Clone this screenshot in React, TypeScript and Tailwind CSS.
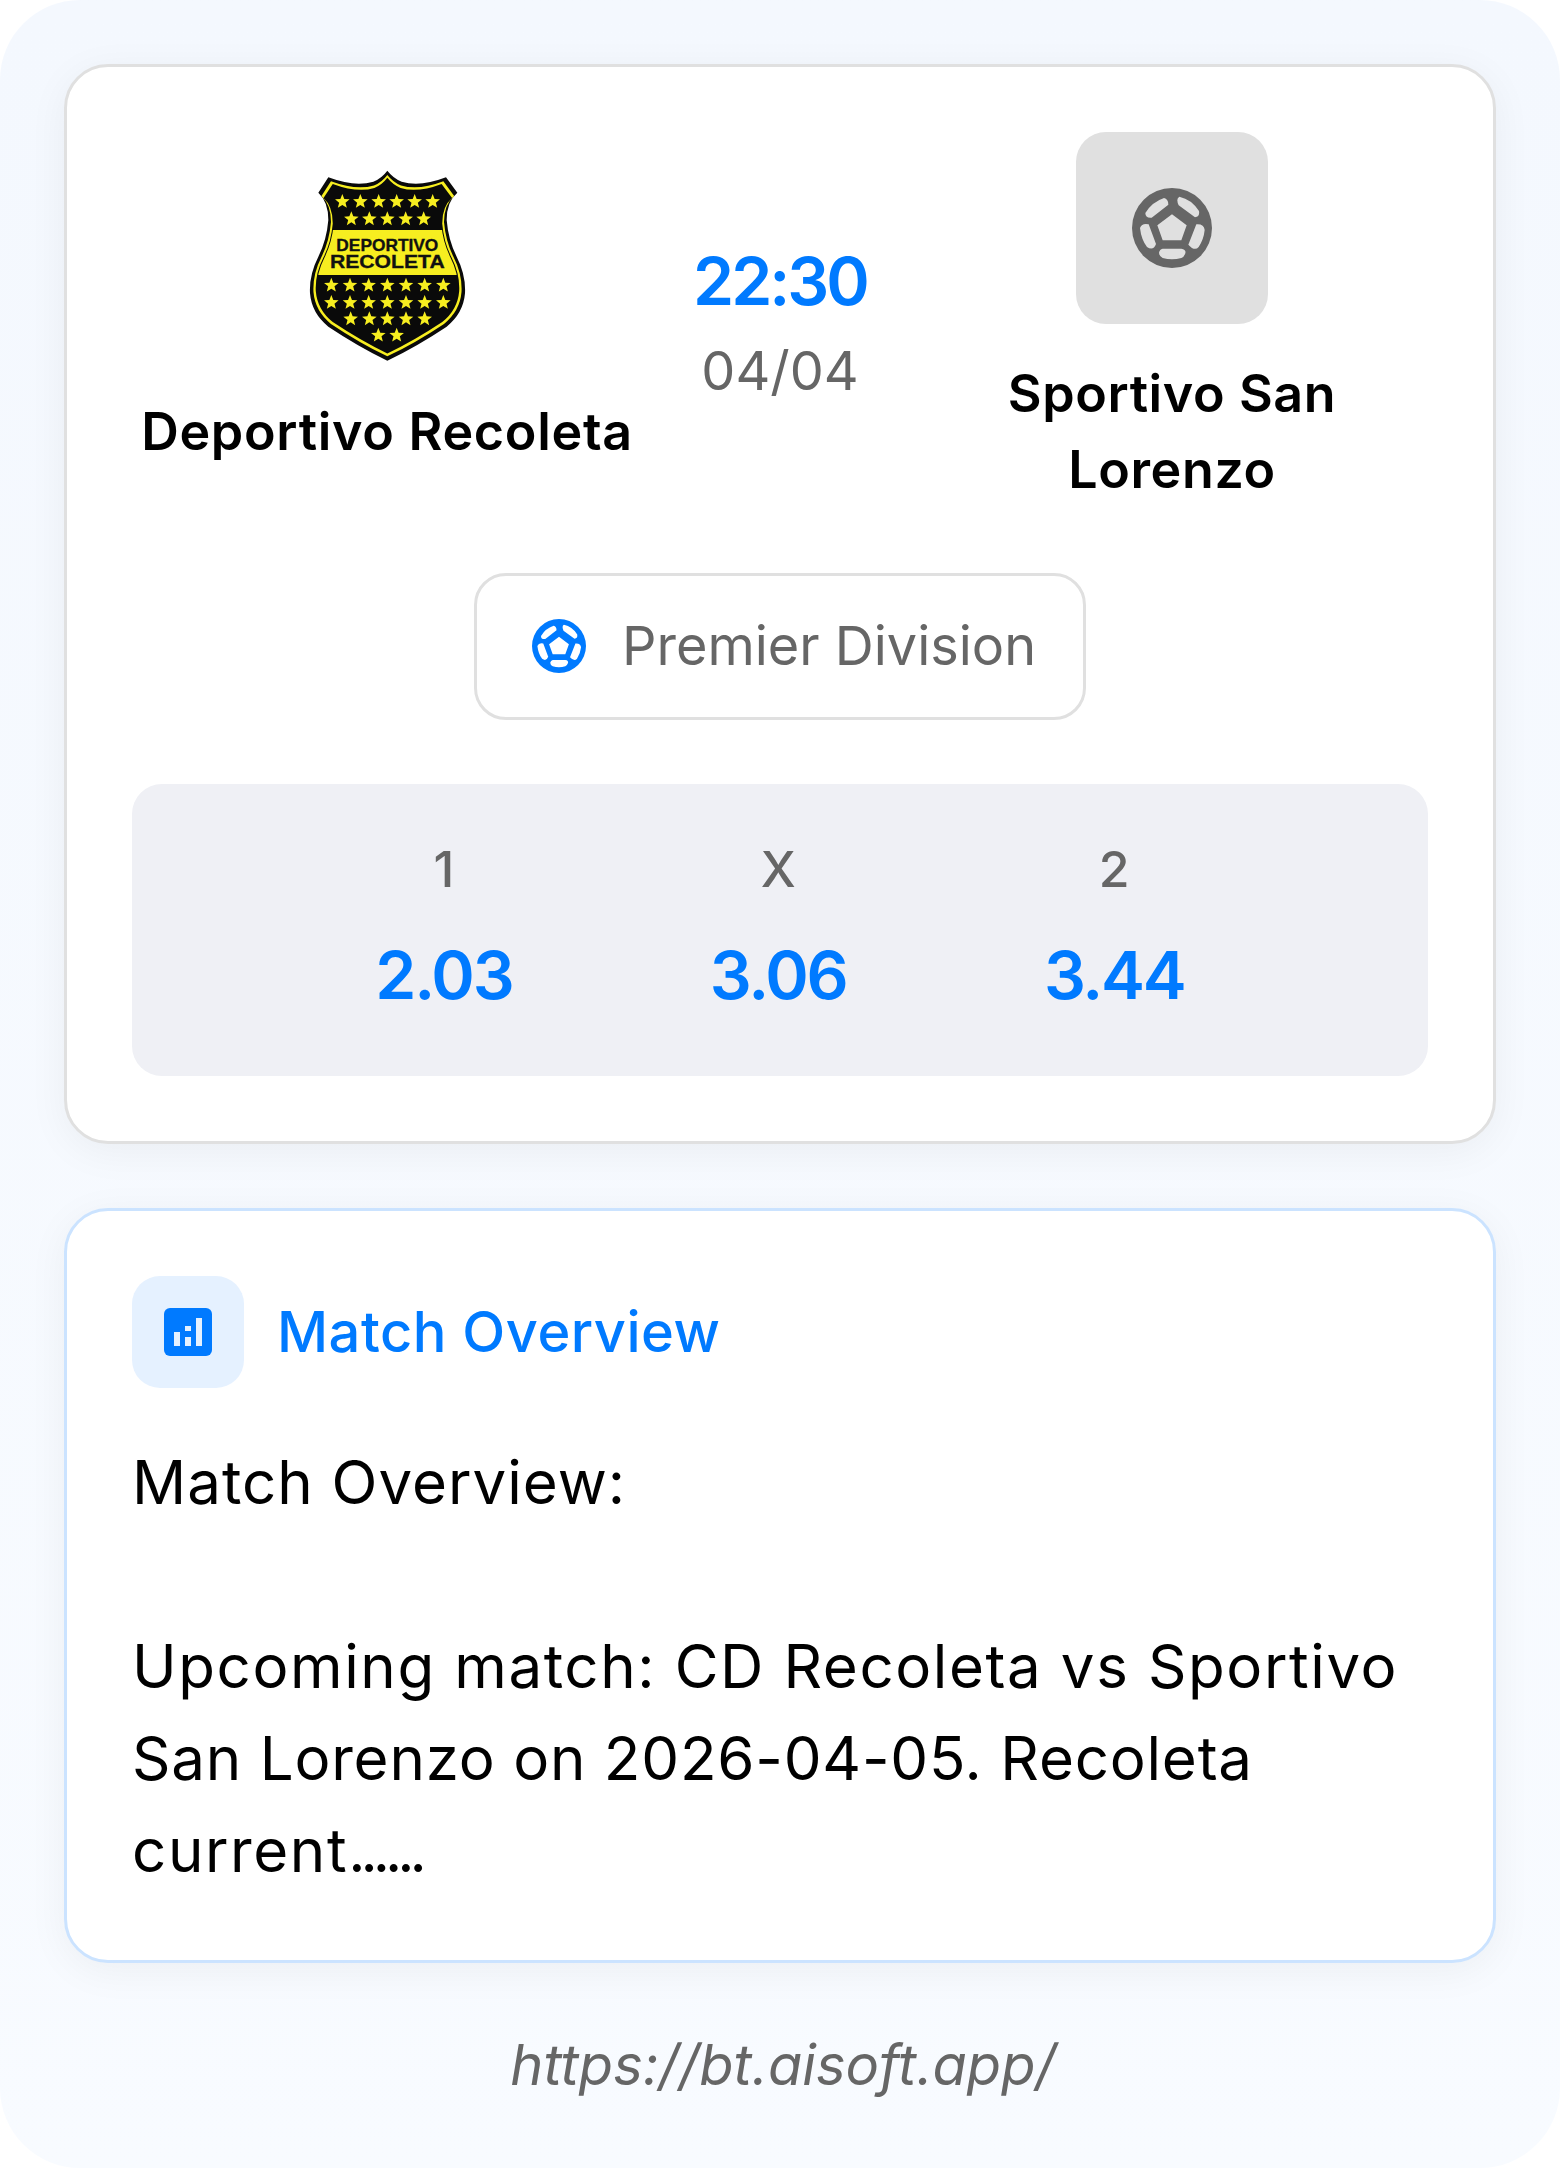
import React from 'react';

const BLUE = '#007aff';

const BALL_PATH =
  'M12 0a12 12 0 1 0 0 24a12 12 0 1 0 0-24z' +
  'M12 7.9L16.4 11.2L14.8 15.7H9.2L7.6 11.2z' +
  'M14.2 2.6Q17.9 3.4 20.1 6.9Q20.4 8.6 18.9 8.8L14 5.2Q13.1 3.2 14.2 2.6z' +
  'M9.6 3Q10.9 3.3 10.9 5L5.9 8.9Q4 9.1 4 7.5Q6 4.2 9.6 3z' +
  'M19.3 10.9Q21.6 10.7 21.8 12.6Q21.5 15.5 20 17.7Q18.8 19.1 16.9 17z' +
  'M2.4 12Q3 10.4 5 10.9L7.2 16.8Q6.4 19 4.5 17.7Q2.8 15.5 2.4 12z' +
  'M9.2 18.2H14.8Q16.3 18.4 16 19.6Q15.5 20.9 14.8 21Q12 21.8 9.2 21Q8.2 20.6 8.1 19.4Q8.3 18.4 9.2 18.2z';

const BallIcon: React.FC<{ className: string; color: string }> = ({ className, color }) => (
  <svg viewBox="0 0 24 24" className={className}>
    <path d={BALL_PATH} fill={color} fillRule="evenodd" />
  </svg>
);

const SHIELD =
  'M382 62Q400 85 425 95Q480 112 558 82L592 128Q560 155 560 210Q565 270 590 320Q618 375 615 430Q610 490 560 530Q470 590 382 632Q295 590 205 530Q155 490 150 430Q147 375 175 320Q200 270 205 210Q205 155 175 128L205 82Q285 112 340 95Q365 85 382 62Z';

const starRows = [
  { y: 155, xs: [247, 301, 356, 410, 464, 518] },
  { y: 207, xs: [274, 328, 382, 437, 491] },
  { y: 406, xs: [214, 270, 326, 382, 438, 494, 550] },
  { y: 458, xs: [214, 270, 326, 382, 438, 494, 550] },
  { y: 507, xs: [272, 328, 382, 438, 494] },
  { y: 556, xs: [355, 410] },
];

const STAR = '0,-23 5.9,-8.1 21.9,-7.1 9.5,3.1 13.5,18.6 0,10 -13.5,18.6 -9.5,3.1 -21.9,-7.1 -5.9,-8.1';

const Crest: React.FC = () => (
  <svg viewBox="93 60 576 576" className="h-[192px] w-[192px]">
    <defs>
      <clipPath id="crest-inner">
        <path d={SHIELD} transform="translate(382 345) scale(.91) translate(-382 -345)" />
      </clipPath>
    </defs>
    <path d={SHIELD} fill="#0a0a0a" />
    <path d={SHIELD} fill="#f7ee20" transform="translate(382 345) scale(.955) translate(-382 -345)" />
    <path d={SHIELD} fill="#0a0a0a" transform="translate(382 345) scale(.925) translate(-382 -345)" />
    <g clipPath="url(#crest-inner)">
      <rect x="130" y="240" width="510" height="135" fill="#f7ee20" />
    </g>
    {starRows.map((row) =>
      row.xs.map((x) => (
        <polygon key={`${row.y}-${x}`} points={STAR} transform={`translate(${x} ${row.y})`} fill="#f7ee20" />
      )),
    )}
    <text x="382" y="302" textAnchor="middle" textLength="306" lengthAdjust="spacingAndGlyphs" fontSize="50" fontWeight="700" fontFamily="Liberation Sans, sans-serif" fill="#111" stroke="#111" strokeWidth="1">
      DEPORTIVO
    </text>
    <text x="382" y="354" textAnchor="middle" textLength="344" lengthAdjust="spacingAndGlyphs" fontSize="56" fontWeight="700" fontFamily="Liberation Sans, sans-serif" fill="#111" stroke="#111" strokeWidth="1">
      RECOLETA
    </text>
  </svg>
);

const odds = [
  { label: '1', value: '2.03' },
  { label: 'X', value: '3.06' },
  { label: '2', value: '3.44' },
];

export default function App() {
  return (
    <div className="h-[2168px] w-[1560px] bg-white font-['Inter',sans-serif]">
      <div className="flex h-full flex-col gap-16 rounded-[80px] bg-gradient-to-b from-[#f4f8fe] to-[#f8fbff] p-16">
        {/* match card */}
        <section className="flex h-[1080px] flex-col rounded-[44px] border-[3px] border-[#e0e0e0] bg-white p-[65px] shadow-[0_8px_40px_rgba(0,0,0,0.05)]">
          <div className="grid h-[376px] grid-cols-[510px_276px_508px] items-center">
            <div className="flex flex-col items-center gap-8">
              <Crest />
              <div className="text-center text-[52px] leading-[76px] font-semibold tracking-[0.7px] text-black">Deportivo Recoleta</div>
            </div>
            <div className="flex flex-col items-center pt-3">
              <div className="text-[66px] leading-[88px] font-semibold tracking-[-3px] text-[#007aff]">22:30</div>
              <div className="pt-[2px] text-[54px] leading-[88px] text-[#666666]">04/04</div>
            </div>
            <div className="flex flex-col items-center gap-8">
              <div className="flex h-[192px] w-[192px] items-center justify-center rounded-[30px] bg-[#e0e0e0]">
                <BallIcon className="h-20 w-20" color="#666666" />
              </div>
              <div className="w-[400px] text-center text-[52px] leading-[76px] font-semibold tracking-[0.6px] text-black">Sportivo San Lorenzo</div>
            </div>
          </div>

          <div className="mt-[65px] flex justify-center">
            <div className="flex h-[147px] w-[612px] items-center gap-9 rounded-[32px] border-[3px] border-[#e0e0e0] pb-[2px] pl-[55px]">
              <BallIcon className="h-[54px] w-[54px]" color={BLUE} />
              <span className="text-[54px] font-normal text-[#666666]">Premier Division</span>
            </div>
          </div>

          <div className="mt-16 flex h-[292px] items-center justify-evenly rounded-[30px] bg-[#eff0f5] px-[46px] pb-2">
            {odds.map((o) => (
              <div key={o.label} className="flex flex-col items-center gap-[22px]">
                <span className="text-[50px] leading-[76px] font-medium text-[#666666]">{o.label}</span>
                <span className="text-[66px] leading-[92px] font-semibold tracking-[-2.2px] text-[#007aff]">{o.value}</span>
              </div>
            ))}
          </div>
        </section>

        {/* overview card */}
        <section className="h-[755px] rounded-[44px] border-[3px] border-[#cbe3ff] bg-white p-[65px] shadow-[0_8px_40px_rgba(0,0,0,0.05)]">
          <div className="flex items-center gap-[33px]">
            <div className="flex h-28 w-28 items-center justify-center rounded-[28px] bg-[#e5f1ff]">
              <svg viewBox="0 0 48 48" className="h-12 w-12">
                <rect width="48" height="48" rx="6" fill={BLUE} />
                <path d="M10 24h6v14h-6zM21 18h6v5h-6zM21 29h6v9h-6zM32 10h6v28h-6z" fill="#e5f1ff" />
              </svg>
            </div>
            <h2 className="text-[56px] font-medium tracking-[0.5px] text-[#007aff]">Match Overview</h2>
          </div>
          <div className="mt-12 text-[60px] leading-[92px] whitespace-nowrap text-black">
            <p className="tracking-[1px]">Match Overview:</p>
            <p className="mt-[92px] tracking-[1.6px]">Upcoming match: CD Recoleta vs Sportivo</p>
            <p className="tracking-[0.8px]">San Lorenzo on 2026-04-05. Recoleta</p>
            <p className="tracking-[1.6px]">
              current<span className="tracking-[-5px]">......</span>
            </p>
          </div>
        </section>

        <div className="mt-[-2px] pl-[6px] text-center text-[56px] leading-[80px] text-[#666666] italic">https://bt.aisoft.app/</div>
      </div>
    </div>
  );
}
